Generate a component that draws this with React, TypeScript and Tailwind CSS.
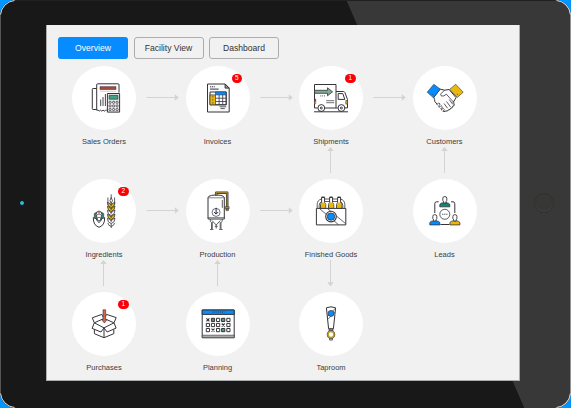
import type { ReactNode } from "react";

const INK = "#34343a";
const BLUE = "#078cff";
const GOLD = "#e8b80c";
const GREEN = "#128573";

function Icon({ children }: { children: ReactNode }) {
  return (
    <svg viewBox="0 0 64 64" className="block size-16" fill="none" stroke={INK} strokeWidth="1" strokeLinejoin="round">
      {children}
    </svg>
  );
}

function SalesOrders() {
  return (
    <Icon>
      <path d="M24.7 22.5h-3.6q-.8 0-.8.8v19.4q0 .8.8.8h3.6" />
      <path d="M47 26.6v-8.1q0-.7-.7-.7H25.7q-1 0-1 1v25.4h1.5l1 .9 1.3-.9 1.3.9 1.3-.9 1.3.9 1.3-.9h1" />
      <rect x="28" y="20.6" width="16" height="3" fill="#a8483c" strokeWidth="0.5" />
      <path d="M28 25.4h16" stroke="#bbb" strokeWidth="0.6" />
      <path d="M28.7 33.5V40M31 31v9M33.4 28v12" strokeWidth="0.9" />
      <rect x="35.4" y="27.5" width="12.2" height="18.6" fill="#e9e9e9" strokeWidth="1" />
      <rect x="37.2" y="29.4" width="8.7" height="3.8" fill="#3fa487" strokeWidth="0.7" />
      {[36.3, 39.9, 43.5].map((y) =>
        [38.1, 41.6, 45.1].map((x) => (
          <rect key={`${x}-${y}`} x={x - 1} y={y - 1} width="2" height="2" rx="0.7" fill="#fff" strokeWidth="0.8" />
        )),
      )}
    </Icon>
  );
}

function Invoices() {
  return (
    <Icon>
      <path d="M21.5 18h17.6l4.1 4.1V46H21.5z" fill="#fafafa" strokeWidth="1" />
      <path d="M39.1 18v4.1h4.1z" fill="#999" />
      <path d="M24 20.8h4.8" strokeDasharray="1.2 .7" />
      <path d="M24 23.1h8.6" />
      <path d="M24 26h16.2v12.8H24z" fill="#fff" />
      <path d="M29.5 25.9h10.7v3H29.5z" fill={BLUE} strokeWidth="0.6" />
      <path d="M24 28.9h5.5v9.9H24z" fill={GOLD} strokeWidth="0.7" />
      <path d="M29.5 32.2h10.7M29.5 35.5h10.7M33.1 28.9v9.9M36.7 28.9v9.9M40.2 28.9v9.9M29.5 38.8h10.7" strokeWidth="0.8" />
      <path d="M26.8 30v7.8" strokeDasharray="1.4 1.7" strokeWidth="0.7" />
      <path d="M33.6 40.8h6.6M34.6 42.6h4.2" strokeWidth="0.8" />
    </Icon>
  );
}

function Shipments() {
  return (
    <Icon>
      <path d="M18.6 42H15.5V18.5H37V42H26M37 25.5h7.4q1 0 1.5 1l2.6 7v8.4h-2.6M37 42h1.7" />
      <path d="M39.2 27.6h4.6l2 5.8h-6.6z" />
      <path d="M15.6 24.3h12.9v-2.5l5 4-5 4v-2.5H15.6z" fill="#7faa94" strokeWidth="0.8" />
      <path d="M21.2 29.9h5.2" strokeDasharray="1 .9" strokeWidth="0.8" />
      <path d="M27.2 34.7h8M27.2 36.7h8" strokeWidth="0.7" />
      <path d="M15.4 33h1.5v2.4h-1.5z" fill="#c33" strokeWidth="0.3" />
      <path d="M15.4 35.4h1.5v2.4h-1.5z" fill={GOLD} strokeWidth="0.3" />
      <path d="M46.8 34.5h1.8v3.6h-1.8z" fill={GOLD} strokeWidth="0.6" />
      <circle cx="22.3" cy="42" r="3.4" fill="#fff" />
      <circle cx="22.3" cy="42" r="1" />
      <circle cx="42.4" cy="42" r="3.4" fill="#fff" />
      <circle cx="42.4" cy="42" r="1" />
      <path d="M15 45.8h34" strokeWidth="1" />
    </Icon>
  );
}

function Customers() {
  return (
    <Icon>
      <path d="M20.8 31.4q1 2 1 4l7.5 9q1.7 2.2 3.6.6 2 .6 2.5-1.2 2 .3 2.3-1.6 2 .1 2-1.9 2.2-.2 1.4-2.4l-1-1.4 3-4.8-7-8.2-4.5.7-4.4-1.1z" fill="#fff" />
      <path d="m31.5 24.2-4 4q.2 2.8 3.3 1.7l2.6-1.7 7.7 8.6M36.3 33.6l3.5 4.8M33.5 35.5l4 5.4M31 37.5l3.6 4.8" strokeWidth="0.8" />
      <path d="m23.6 39 2-2.1 1.6 1.1-1.7 2.3M26 41.6l2-2 1.5 1.4-1.9 2.1M28.3 44l1.8-1.7 1.4 1.4-1.6 1.6" fill="#fff" strokeWidth="0.8" />
      <path d="m20.8 18.3 6.4 4.7-6.7 8.8-6.3-5.6z" fill={BLUE} strokeWidth="0.6" />
      <path d="m42.7 18.3 7.5 7.9-5.9 5.2-7.7-8z" fill={GOLD} strokeWidth="0.6" />
      <circle cx="20" cy="28.5" r=".5" fill={INK} stroke="none" />
      <circle cx="44.3" cy="28.2" r=".5" fill={INK} stroke="none" />
    </Icon>
  );
}

function Ingredients() {
  return (
    <Icon>
      <path d="M21.3 38.6q-.2 7.8 5.7 9.7 5.9-1.9 5.7-9.7-3.5.2-4.2 3.6L27 43.5l-1.5-1.3q-.7-3.4-4.2-3.6z" fill="#fff" />
      <path d="M22.3 38.5v-4l2.2-1.3 1 2.2v5.5zM31.7 38.5v-4l-2.2-1.3-1 2.2v5.5z" fill="#3c8573" strokeWidth="0.6" />
      <path d="M24.8 33q2.2-2 4.4 0l.6 2.5-1.3 5.3L27 42l-1.5-1.2-1.3-5.3z" fill="#fff" strokeWidth="0.8" />
      <path d="M25 36q2-2 4 0M25.3 39q1.7-1.6 3.4 0" strokeWidth="0.7" />
      <circle cx="27" cy="33.4" r="1" fill="#e7a9a0" strokeWidth="0.4" />
      <path d="M39.2 15.3V49M35.9 18.5V26M42.6 18.5V26" strokeWidth="0.8" />
      <path d="M39.2 18.5q-2.5 3.2 0 6 2.5-2.8 0-6z" fill="#fff" strokeWidth="0.8" />
      {[23.3, 27.2, 31.2, 35.2, 39.2].map((y, i) => (
        <path
          key={y}
          d={`M39.2 ${y + 5.3}q-3.7-.7-3.8-5.2 3.4.6 3.8 3.2.4-2.6 3.8-3.2-.1 4.5-3.8 5.2z`}
          fill={i === 2 || i === 4 ? "#fff" : GOLD}
          strokeWidth="0.8"
        />
      ))}
      <path d="M39.2 47.4q-2.8-.5-3.4-3.4M39.2 47.4q2.8-.5 3.4-3.4" strokeWidth="0.8" />
    </Icon>
  );
}

function Production() {
  return (
    <Icon>
      <path d="M22 18.6q0-1.5 3.5-2.2 4.7-1 9.3 0 3.5.7 3.5 2.2V40H22z" fill="#fff" />
      <path d="M22 18.8h16.3M22 38.6h16.3" strokeWidth="0.6" />
      <path d="M30.2 16.8v-3.1h11v14" stroke={INK} strokeWidth="2.5" />
      <path d="M30.2 16.4v-2.7h11v14" stroke="#9d8230" strokeWidth="1.3" />
      <path d="M39.3 27.6h3.8v2.2h-3.8zM40 29.8h2.4v1.8H40z" fill="#b5942d" strokeWidth="0.6" />
      <path d="M36.3 21v7.8" strokeWidth="0.8" />
      <circle cx="30.1" cy="33.4" r="4" fill="#fff" strokeWidth="0.7" />
      <path d="M30.1 28.8v5.5m-2-1.2 2 2 2-2" stroke="#1a2540" />
      <path d="M24.3 40v2.5l1.2 1V50M36.2 40v2.5l-1.2 1V50M26.3 43v7M34.2 43v7M24 50.5h3.4M33.2 50.5h3.4" strokeWidth="0.75" />
      <path d="M26 41.5 30.2 46l4.2-4.5M30.2 46v3.5M28.8 47.3h2.8" strokeWidth="0.8" />
    </Icon>
  );
}

function FinishedGoods() {
  return (
    <Icon>
      <path d="M18.2 29.5v-4q0-4.5 4.5-5.5h18.6q4.5 1 4.5 5.5v4M20.2 29.3v-3q0-3 3-3.8h17.6q3 .8 3 3.8v3" strokeWidth="0.8" />
      {[24.1, 32.1, 40.1].map((x) => (
        <g key={x}>
          <path d={`M${x - 1.5} 18.5h3v5l1.1 2v4h-5.2v-4l1.1-2z`} fill="#fff" />
          <path d={`M${x - 1.2} 23.6h2.4l1.1 1.9v3.9h-4.6v-3.9z`} fill={GOLD} stroke="none" />
          <path d={`M${x - 1.5} 18.2h3`} strokeWidth="1.3" />
        </g>
      ))}
      <rect x="17.4" y="29.4" width="29.4" height="16.5" fill="#fff" strokeWidth="1" />
      <path d="m20.5 29.6 19 16.1M28.5 29.6l18.1 15" strokeWidth="0.75" />
      <circle cx="32" cy="37.6" r="5.3" fill="#fff" strokeWidth="1.1" />
      <circle cx="32" cy="37.6" r="3.7" fill={BLUE} strokeWidth="0.8" />
    </Icon>
  );
}

function Person({ x, y, color }: { x: number; y: number; color: string }) {
  return (
    <g transform={`translate(${x} ${y})`}>
      <path d="M-5 7.2V5.4q0-1.2 1.3-1.7L-1.2 3h2.4l2.5.7Q5 4.2 5 5.4v1.8z" fill={color} strokeWidth="0.8" />
      <path d="M-2-1.3q0-1.8 2-1.8t2 1.8v2.1L1.1 2.3v1.2h-2.2V2.3L-2 .8z" fill="#fff" strokeWidth="0.9" />
    </g>
  );
}

function Leads() {
  return (
    <Icon>
      <path d="M25.6 22.8h-2q-1.8 0-1.8 1.8V34M38 22.8h2q1.8 0 1.8 1.8V34M27.4 45.5h9" />
      <Person x={31.8} y={20.6} color={GREEN} />
      <Person x={21.8} y={38.7} color={BLUE} />
      <Person x={41.9} y={38.7} color={GOLD} />
      <circle cx="31.8" cy="35.3" r="5" strokeWidth="0.8" />
      <path d="M29.2 35.3h5.2" strokeDasharray="1.1 .95" strokeWidth="1.1" />
    </Icon>
  );
}

function Purchases() {
  return (
    <Icon>
      <path d="M22.4 37.5v4.2L32 45.7l9.8-4v-4.2" />
      <path d="M22.3 30.8 32 26.5l10 4.3L32 35.9z" />
      <path d="m22.3 30.8-2-5 9.5-3.4 2.2 4.1 2.6-4.1 9.6 3.2-2.2 5.2" />
      <path d="m22.3 30.8-2.2 5.6 8.9 3.6 3-4.1 3.1 4.1 9-3.9-2.1-5.3" />
      <path d="M32 35.9v9.8" />
      <path d="M31 17.8h2.7v9.7h1.4l-2.7 3.6-2.8-3.6H31z" fill="#d9624b" strokeWidth="0.6" />
    </Icon>
  );
}

function Planning() {
  const columns = [21.9, 27, 32.1, 37.2, 42.4];
  const rows = [27.9, 33, 38.1];
  const crossed = ["0-0", "3-1", "1-2"];
  return (
    <Icon>
      <rect x="16.2" y="18" width="32" height="27.7" fill="#fff" strokeWidth="1" />
      <path d="M16.2 18h32v4.4h-32z" fill={BLUE} />
      <path d="M16.2 43.2h32v2.5h-32z" fill="#aaa" strokeWidth="0.6" />
      <path d="M26.5 20h12" strokeDasharray="1 .9" strokeWidth="0.9" />
      {rows.map((y, r) =>
        columns.map((x, c) => {
          const id = `${c}-${r}`;
          if (crossed.includes(id)) {
            return <path key={id} d={`M${x - 1.5} ${y - 1.5}l3 3m0-3l-3 3`} strokeWidth="1.1" />;
          }
          const fill = c === 3 ? "#5a9b82" : id === "1-0" ? "#777" : "#fff";
          return <rect key={id} x={x - 1.6} y={y - 1.6} width="3.2" height="3.2" fill={fill} strokeWidth="1" />;
        }),
      )}
    </Icon>
  );
}

function Taproom() {
  return (
    <Icon>
      <path d="M27.4 15.8q4.6-2 9.2 0l-2.2 21h-4.8z" fill="#fff" />
      <path d="m28.3 24.6 8-8.2M29 27.2l6.8-7" strokeWidth="0.7" />
      <circle cx="32" cy="21.4" r="3" fill={BLUE} strokeWidth="0.7" />
      <path d="M30.1 37h3.8v2.3h-3.8z" fill="#999" strokeWidth="0.7" />
      <path d="M30.6 45.5h2.8v2.6h-2.8z" fill="#ccc" strokeWidth="0.7" />
      <circle cx="32" cy="42.5" r="3" stroke={INK} strokeWidth="2.5" />
      <circle cx="32" cy="42.5" r="3" fill="#fff" stroke="#bd9b20" strokeWidth="1.6" />
    </Icon>
  );
}

function Node({ label, badge, children }: { label: string; badge?: number; children: ReactNode }) {
  return (
    <div className="flex flex-col items-center">
      <div className="relative size-16 shrink-0 rounded-full bg-white">
        {children}
        {badge !== undefined && (
          <span className="absolute left-[46px] top-[7.5px] flex h-[9.5px] w-[10.5px] items-center justify-center rounded-full bg-[#fb0007] text-[6.5px] leading-none text-white">
            {badge}
          </span>
        )}
      </div>
      <span className="mt-[7px] whitespace-nowrap text-[7.5px] leading-[10px] text-[#3c3c3c]">{label}</span>
    </div>
  );
}

function ArrowRight() {
  return (
    <svg viewBox="0 0 49.5 64" className="h-16 w-full" stroke="#d3d3d3" fill="#d3d3d3">
      <path d="M10.5 31.5h29" />
      <path d="M38.8 28.3v6.4l4-3.2z" stroke="none" />
    </svg>
  );
}

function ArrowVertical({ down = false }: { down?: boolean }) {
  return (
    <svg viewBox="0 0 64 32" className="h-8 w-16" stroke="#d3d3d3" fill="#d3d3d3">
      {down ? (
        <>
          <path d="M31.5 0v23" />
          <path d="M28.3 22.2h6.4l-3.2 4z" stroke="none" />
        </>
      ) : (
        <>
          <path d="M31.5 3v23" />
          <path d="M28.3 4h6.4l-3.2-4z" stroke="none" />
        </>
      )}
    </svg>
  );
}

function Tab({ label, active = false }: { label: string; active?: boolean }) {
  return (
    <button
      className={
        active
          ? "h-[22px] w-[70px] rounded-[3px] bg-[#078cff] text-[8.6px] leading-none text-white"
          : "h-[22px] w-[70px] rounded-[3px] border border-[#adadad] text-[8.6px] leading-none text-[#333]"
      }
    >
      {label}
    </button>
  );
}

export default function App() {
  return (
    <div className="relative h-[408px] w-[571px] overflow-hidden bg-[#0095ff] font-['Liberation_Sans',Arial,sans-serif]">
      <div className="flex h-[408px] w-[571px] items-start rounded-[16px] bg-[linear-gradient(66.43deg,#181818_480.2px,#383838_481px)] pt-[25px] shadow-[inset_1px_0_0_#555,inset_-1px_0_0_#929292,inset_0_1px_0_#202020]">
        <div className="flex h-[356px] w-[46px] shrink-0 items-center justify-center pr-[3px]">
          <span className="size-[6px] rounded-full border border-[#061015] bg-[#38b8d8]" />
        </div>
        <main className="h-[356px] w-[474px] shrink-0 overflow-hidden border border-t-0 border-[#a9adad] bg-[#f1f1f1]">
          <nav className="flex gap-[5.5px] pl-[11px] pt-3">
            <Tab label="Overview" active />
            <Tab label="Facility View" />
            <Tab label="Dashboard" />
          </nav>
          <div className="ml-[25px] mt-[7px] grid grid-cols-[64px_49.5px_64px_49.5px_64px_49.5px_64px] grid-rows-[81px_32px_81px_32px_81px]">
            <Node label="Sales Orders"><SalesOrders /></Node>
            <ArrowRight />
            <Node label="Invoices" badge={5}><Invoices /></Node>
            <ArrowRight />
            <Node label="Shipments" badge={1}><Shipments /></Node>
            <ArrowRight />
            <Node label="Customers"><Customers /></Node>

            <div className="col-start-5"><ArrowVertical /></div>
            <div className="col-start-7"><ArrowVertical /></div>

            <div className="col-start-1"><Node label="Ingredients" badge={2}><Ingredients /></Node></div>
            <ArrowRight />
            <Node label="Production"><Production /></Node>
            <ArrowRight />
            <Node label="Finished Goods"><FinishedGoods /></Node>
            <div className="col-start-7"><Node label="Leads"><Leads /></Node></div>

            <div className="col-start-1"><ArrowVertical /></div>
            <div className="col-start-3"><ArrowVertical /></div>
            <div className="col-start-5"><ArrowVertical down /></div>

            <div className="col-start-1"><Node label="Purchases" badge={1}><Purchases /></Node></div>
            <div className="col-start-3"><Node label="Planning"><Planning /></Node></div>
            <div className="col-start-5"><Node label="Taproom"><Taproom /></Node></div>
          </div>
        </main>
        <div className="flex h-[356px] flex-1 items-center justify-center">
          <span className="mr-[3px] size-[20px] rounded-full border border-[#313131] bg-[#373736] shadow-[inset_0_-1px_1px_#444]" />
        </div>
      </div>
      <svg viewBox="0 0 571 408" className="pointer-events-none absolute inset-0 size-full" fill="none" stroke="#d0d5d8" strokeWidth="1">
        <path d="M.5 14.5A15.5 15.5 0 0 1 14.5.5M556.5.5A15.5 15.5 0 0 1 570.5 14.5M.5 393.5A15.5 15.5 0 0 0 14.5 407.5M556.5 407.5A15.5 15.5 0 0 0 570.5 393.5" />
      </svg>
    </div>
  );
}
